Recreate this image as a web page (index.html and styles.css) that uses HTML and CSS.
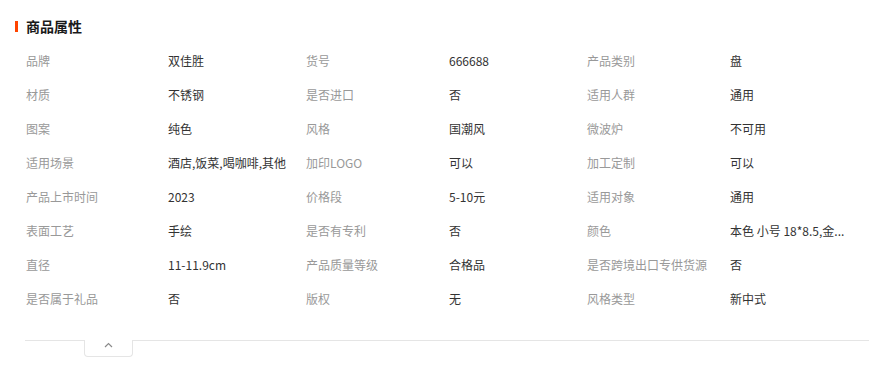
FILE: index.html
```html
<!DOCTYPE html>
<html lang="zh-CN">
<head>
<meta charset="utf-8">
<title>商品属性</title>
<link rel="stylesheet" href="styles.css">
</head>
<body>
<div class="panel">
  <div class="title"><span class="bar"></span><h2>商品属性</h2></div>
  <div class="attrs">
    <div class="k">品牌</div><div class="v">双佳胜</div>
    <div class="k">货号</div><div class="v">666688</div>
    <div class="k">产品类别</div><div class="v">盘</div>

    <div class="k">材质</div><div class="v">不锈钢</div>
    <div class="k">是否进口</div><div class="v">否</div>
    <div class="k">适用人群</div><div class="v">通用</div>

    <div class="k">图案</div><div class="v">纯色</div>
    <div class="k">风格</div><div class="v">国潮风</div>
    <div class="k">微波炉</div><div class="v">不可用</div>

    <div class="k">适用场景</div><div class="v">酒店,饭菜,喝咖啡,其他</div>
    <div class="k">加印LOGO</div><div class="v">可以</div>
    <div class="k">加工定制</div><div class="v">可以</div>

    <div class="k">产品上市时间</div><div class="v">2023</div>
    <div class="k">价格段</div><div class="v">5-10元</div>
    <div class="k">适用对象</div><div class="v">通用</div>

    <div class="k">表面工艺</div><div class="v">手绘</div>
    <div class="k">是否有专利</div><div class="v">否</div>
    <div class="k">颜色</div><div class="v">本色 小号 18*8.5,金...</div>

    <div class="k">直径</div><div class="v">11-11.9cm</div>
    <div class="k">产品质量等级</div><div class="v">合格品</div>
    <div class="k">是否跨境出口专供货源</div><div class="v">否</div>

    <div class="k">是否属于礼品</div><div class="v">否</div>
    <div class="k">版权</div><div class="v">无</div>
    <div class="k">风格类型</div><div class="v">新中式</div>
  </div>
  <div class="divider"></div>
  <div class="toggle">
    <svg width="9" height="6" viewBox="0 0 9 6"><polyline points="1,5 4.5,1.5 8,5" fill="none" stroke="#8a8a8a" stroke-width="1.2"/></svg>
  </div>
</div>
</body>
</html>
```

FILE: styles.css
```css
* { box-sizing: border-box; }
html, body {
  margin: 0;
  padding: 0;
  background: #fff;
}
body {
  font-family: "Noto Sans CJK SC", "Noto Sans", sans-serif;
  font-size: 12px;
  color: #333;
}
.panel {
  padding-top: 15px;
}
.title {
  display: flex;
  align-items: center;
  height: 22px;
  padding-left: 15px;
}
.bar {
  width: 3px;
  height: 11px;
  background: #ff4400;
  margin-right: 8px;
}
.title h2 {
  margin: 0;
  font-size: 14px;
  font-weight: bold;
  color: #1a1a1a;
  line-height: 22px;
}
.attrs {
  display: grid;
  grid-template-columns: 142px 138px 143px 138px 143px auto;
  grid-auto-rows: 34px;
  padding-left: 26px;
  margin-top: 6px;
  align-items: center;
}
.k {
  color: #999;
  white-space: nowrap;
}
.v {
  color: #333;
  white-space: nowrap;
}
.divider {
  margin: 25px 0 0 25px;
  border-top: 1px solid #e5e5e5;
}
.toggle {
  margin: -1px 0 0 84px;
  width: 49px;
  height: 17px;
  background: #fff;
  border: 1px solid #e5e5e5;
  border-top: none;
  border-radius: 0 0 4px 4px;
  display: flex;
  justify-content: center;
  padding-top: 2px;
}
.toggle svg { display: block; }
```
